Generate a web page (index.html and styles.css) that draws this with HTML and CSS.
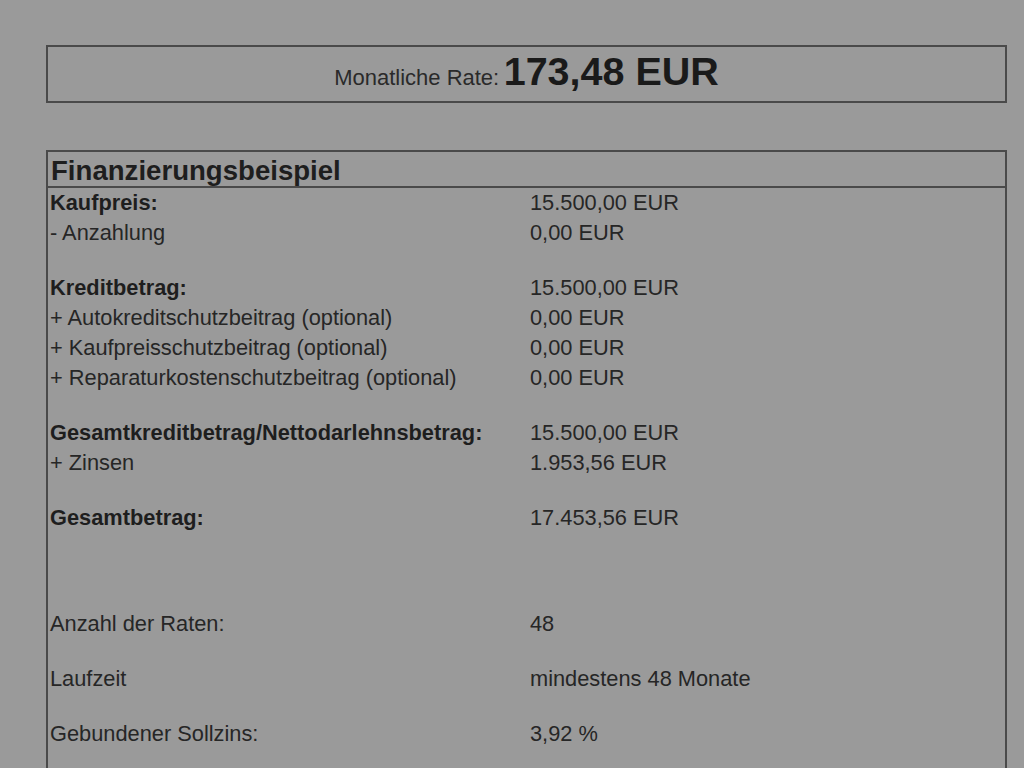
FILE: index.html
```html
<!DOCTYPE html>
<html lang="de">
<head>
<meta charset="utf-8">
<link rel="stylesheet" href="styles.css">
<title>Finanzierungsbeispiel</title>
</head>
<body>
<div class="page">
  <div class="rate-box">
    <span class="rate-label">Monatliche Rate:</span> <span class="rate-value">173,48 EUR</span>
  </div>

  <div class="table-box">
    <div class="table-head">Finanzierungsbeispiel</div>
    <div class="rows">
      <div class="row"><span class="lbl b">Kaufpreis:</span><span class="val">15.500,00 EUR</span></div>
      <div class="row"><span class="lbl">- Anzahlung</span><span class="val">0,00 EUR</span></div>
      <div class="row gap"><span class="lbl b">Kreditbetrag:</span><span class="val">15.500,00 EUR</span></div>
      <div class="row"><span class="lbl">+ Autokreditschutzbeitrag (optional)</span><span class="val">0,00 EUR</span></div>
      <div class="row"><span class="lbl">+ Kaufpreisschutzbeitrag (optional)</span><span class="val">0,00 EUR</span></div>
      <div class="row"><span class="lbl">+ Reparaturkostenschutzbeitrag (optional)</span><span class="val">0,00 EUR</span></div>
      <div class="row gap"><span class="lbl b">Gesamtkreditbetrag/Nettodarlehnsbetrag:</span><span class="val">15.500,00 EUR</span></div>
      <div class="row"><span class="lbl">+ Zinsen</span><span class="val">1.953,56 EUR</span></div>
      <div class="row gap"><span class="lbl b">Gesamtbetrag:</span><span class="val">17.453,56 EUR</span></div>
      <div class="row biggap"><span class="lbl">Anzahl der Raten:</span><span class="val">48</span></div>
      <div class="row gap"><span class="lbl">Laufzeit</span><span class="val">mindestens 48 Monate</span></div>
      <div class="row gap"><span class="lbl">Gebundener Sollzins:</span><span class="val">3,92 %</span></div>
      <div class="row gap"><span class="lbl">&nbsp;</span><span class="val">&nbsp;</span></div>
    </div>
  </div>
</div>
</body>
</html>
```

FILE: styles.css
```css
html, body {
  margin: 0;
  padding: 0;
  background: #9a9a9a;
  height: 768px;
  overflow: hidden;
}

body {
  font-family: "Liberation Sans", Arial, sans-serif;
  color: #222;
}

.page {
  padding: 45px 0 0 46px;
  width: 961px;
}

.rate-box {
  border: 2px solid #4a4a4a;
  height: 54px;
  line-height: 49px;
  text-align: center;
  box-sizing: content-box;
}

.rate-label {
  font-size: 22px;
  color: #2a2a2a;
}

.rate-value {
  font-size: 39.5px;
  font-weight: bold;
  color: #1a1a1a;
}

.table-box {
  margin-top: 47px;
  border: 2px solid #4a4a4a;
  border-bottom: none;
}

.table-head {
  height: 34px;
  line-height: 37px;
  font-size: 27.6px;
  font-weight: bold;
  padding-left: 3px;
  border-bottom: 2px solid #4a4a4a;
  color: #1e1e1e;
  overflow: visible;
}

.rows {
  display: flex;
  flex-direction: column;
}

.row {
  display: flex;
  height: 30px;
  line-height: 30px;
  font-size: 21.8px;
  color: #262626;
}

.row.gap {
  margin-top: 25px;
}

.row.biggap {
  margin-top: 76px;
}

.lbl {
  width: 480px;
  padding-left: 2px;
  white-space: nowrap;
}

.lbl.b {
  font-weight: bold;
  color: #1e1e1e;
}

.val {
  white-space: nowrap;
}
```
